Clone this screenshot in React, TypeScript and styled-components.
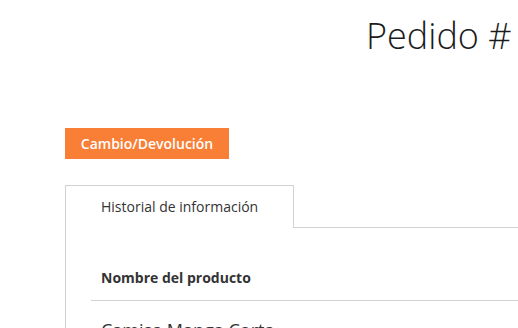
import styled, { createGlobalStyle } from 'styled-components';

const GlobalStyle = createGlobalStyle`
  body {
    margin: 0;
    background: #fff;
    font-family: 'Open Sans', 'Liberation Sans', sans-serif;
    color: #333;
  }
`;

const OrderPage = () => {
  return (
    <Page>
      <GlobalStyle />
      <Title>Pedido #</Title>
      <Actions>
        <ActionButton>Cambio/Devolución</ActionButton>
      </Actions>
      <Tabs>
        <TabBar>
          <Tab active>Historial de información</Tab>
          <TabFill />
        </TabBar>
        <TabPanel>
          <Table>
            <thead>
              <tr>
                <HeadCell>Nombre del producto</HeadCell>
              </tr>
            </thead>
            <tbody>
              <tr>
                <Cell>Camisa Manga Corta</Cell>
              </tr>
            </tbody>
          </Table>
        </TabPanel>
      </Tabs>
    </Page>
  );
};

const Page = styled.div`
  width: 518px;
  height: 328px;
  overflow: hidden;
  padding-left: 65px;
  box-sizing: border-box;
`;

const Title = styled.h1`
  margin: 10px 0 0 301px;
  font-size: 36px;
  font-weight: 300;
  line-height: 52px;
  color: #1b1b1b;
  white-space: nowrap;
`;

const Actions = styled.div`
  display: flex;
  margin-top: 66px;
`;

const ActionButton = styled.button`
  width: 164px;
  height: 31px;
  border: none;
  border-radius: 0;
  background: #f97e36;
  color: #fff;
  font-family: inherit;
  font-size: 14px;
  font-weight: 600;
  cursor: pointer;
`;

const Tabs = styled.div`
  margin-top: 26px;
`;

const TabBar = styled.div`
  display: flex;
  align-items: stretch;
`;

const Tab = styled.div<{ active?: boolean }>`
  width: 229px;
  height: 43px;
  box-sizing: border-box;
  padding: 0 0 2px 35px;
  display: flex;
  align-items: center;
  border: 1px solid #d1d1d1;
  border-bottom: ${({ active }) => (active ? 'none' : '1px solid #d1d1d1')};
  background: #fff;
  font-size: 14px;
  color: #333;
  white-space: nowrap;
`;

const TabFill = styled.div`
  flex: 1;
  border-bottom: 1px solid #d1d1d1;
`;

const TabPanel = styled.div`
  border-left: 1px solid #d1d1d1;
  padding: 28px 0 0 25px;
`;

const Table = styled.table`
  width: 100%;
  border-collapse: collapse;
`;

const HeadCell = styled.th`
  text-align: left;
  padding: 12px 10px 12px;
  font-size: 14px;
  font-weight: 700;
  color: #333;
  border-bottom: 1px solid #d1d1d1;
  line-height: 20px;
`;

const Cell = styled.td`
  padding: 17px 10px 14px;
  font-size: 18px;
  color: #333;
`;

export default OrderPage;
